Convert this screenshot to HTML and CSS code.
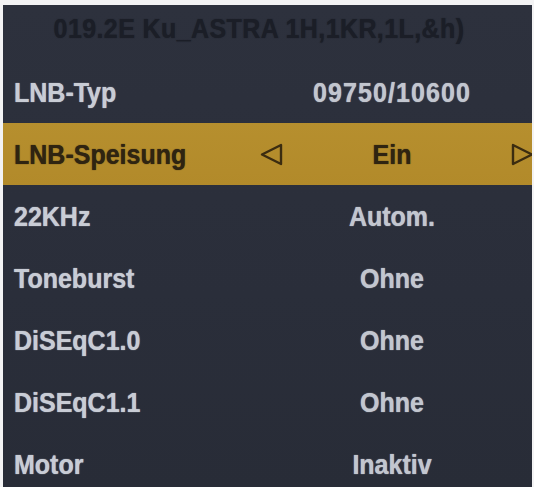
FILE: index.html
```html
<!DOCTYPE html>
<html lang="de">
<head>
<meta charset="utf-8">
<title>LNB-Einstellungen</title>
<link rel="stylesheet" href="styles.css">
</head>
<body>
<div class="screen">
  <div class="title"><span class="txt">019.2E Ku_ASTRA 1H,1KR,1L,&amp;h)</span></div>
  <div class="row">
    <span class="label"><span class="txt">LNB-Typ</span></span>
    <span class="arrow"></span>
    <span class="value num"><span class="txt">09750/10600</span></span>
    <span class="arrow"></span>
  </div>
  <div class="row active">
    <span class="label"><span class="txt">LNB-Speisung</span></span>
    <span class="arrow left"><svg width="24" height="24" viewBox="0 0 24 24"><polygon points="2,12.5 21,3 21,22" fill="none" stroke="#3b2c10" stroke-width="2.4" stroke-linejoin="round"/></svg></span>
    <span class="value"><span class="txt">Ein</span></span>
    <span class="arrow right"><svg width="24" height="24" viewBox="0 0 24 24"><polygon points="2,3 21,12.5 2,22" fill="none" stroke="#3b2c10" stroke-width="2.4" stroke-linejoin="round"/></svg></span>
  </div>
  <div class="row">
    <span class="label"><span class="txt">22KHz</span></span>
    <span class="arrow"></span>
    <span class="value"><span class="txt">Autom.</span></span>
    <span class="arrow"></span>
  </div>
  <div class="row">
    <span class="label"><span class="txt">Toneburst</span></span>
    <span class="arrow"></span>
    <span class="value"><span class="txt">Ohne</span></span>
    <span class="arrow"></span>
  </div>
  <div class="row">
    <span class="label"><span class="txt">DiSEqC1.0</span></span>
    <span class="arrow"></span>
    <span class="value"><span class="txt">Ohne</span></span>
    <span class="arrow"></span>
  </div>
  <div class="row">
    <span class="label"><span class="txt">DiSEqC1.1</span></span>
    <span class="arrow"></span>
    <span class="value"><span class="txt">Ohne</span></span>
    <span class="arrow"></span>
  </div>
  <div class="row">
    <span class="label"><span class="txt">Motor</span></span>
    <span class="arrow"></span>
    <span class="value"><span class="txt">Inaktiv</span></span>
    <span class="arrow"></span>
  </div>
</div>
</body>
</html>
```
FILE: styles.css
```css
html, body {
  margin: 0;
  padding: 0;
  background: #f3f3f4;
  overflow: hidden;
  height: 487px;
}

.screen {
  margin: 5px 2px 0 3px;
  height: 482px;
  background: linear-gradient(180deg, #2d313d 0%, #2a2e3a 60%, #282c37 100%);
  font-family: "Liberation Sans", Arial, sans-serif;
  font-weight: bold;
  font-size: 25px;
  overflow: hidden;
}

.txt {
  display: inline-block;
  transform: scaleY(1.12);
  white-space: nowrap;
  text-shadow: 0 0 1px currentColor;
}

.title {
  height: 56px;
  box-sizing: border-box;
  padding: 0 17px 9px 0;
  display: flex;
  align-items: center;
  justify-content: center;
  color: #1b1e27;
  letter-spacing: 0.4px;
}

.row {
  height: 62px;
  display: grid;
  grid-template-columns: 257px 24px 216px 1fr;
  align-items: center;
  color: #c8ccd5;
}

.label {
  padding-left: 11px;
}

.value {
  text-align: center;
  color: #c2c6cf;
}

.value.num {
  letter-spacing: 1.1px;
}

.arrow {
  display: flex;
  align-items: center;
}

.arrow.left {
  justify-content: center;
}

.arrow.right {
  padding-left: 11px;
}

.row.active {
  background: linear-gradient(180deg, #b68f2e 0%, #b28a2a 100%);
}

.row.active .label,
.row.active .value {
  color: #2f2411;
}
```
